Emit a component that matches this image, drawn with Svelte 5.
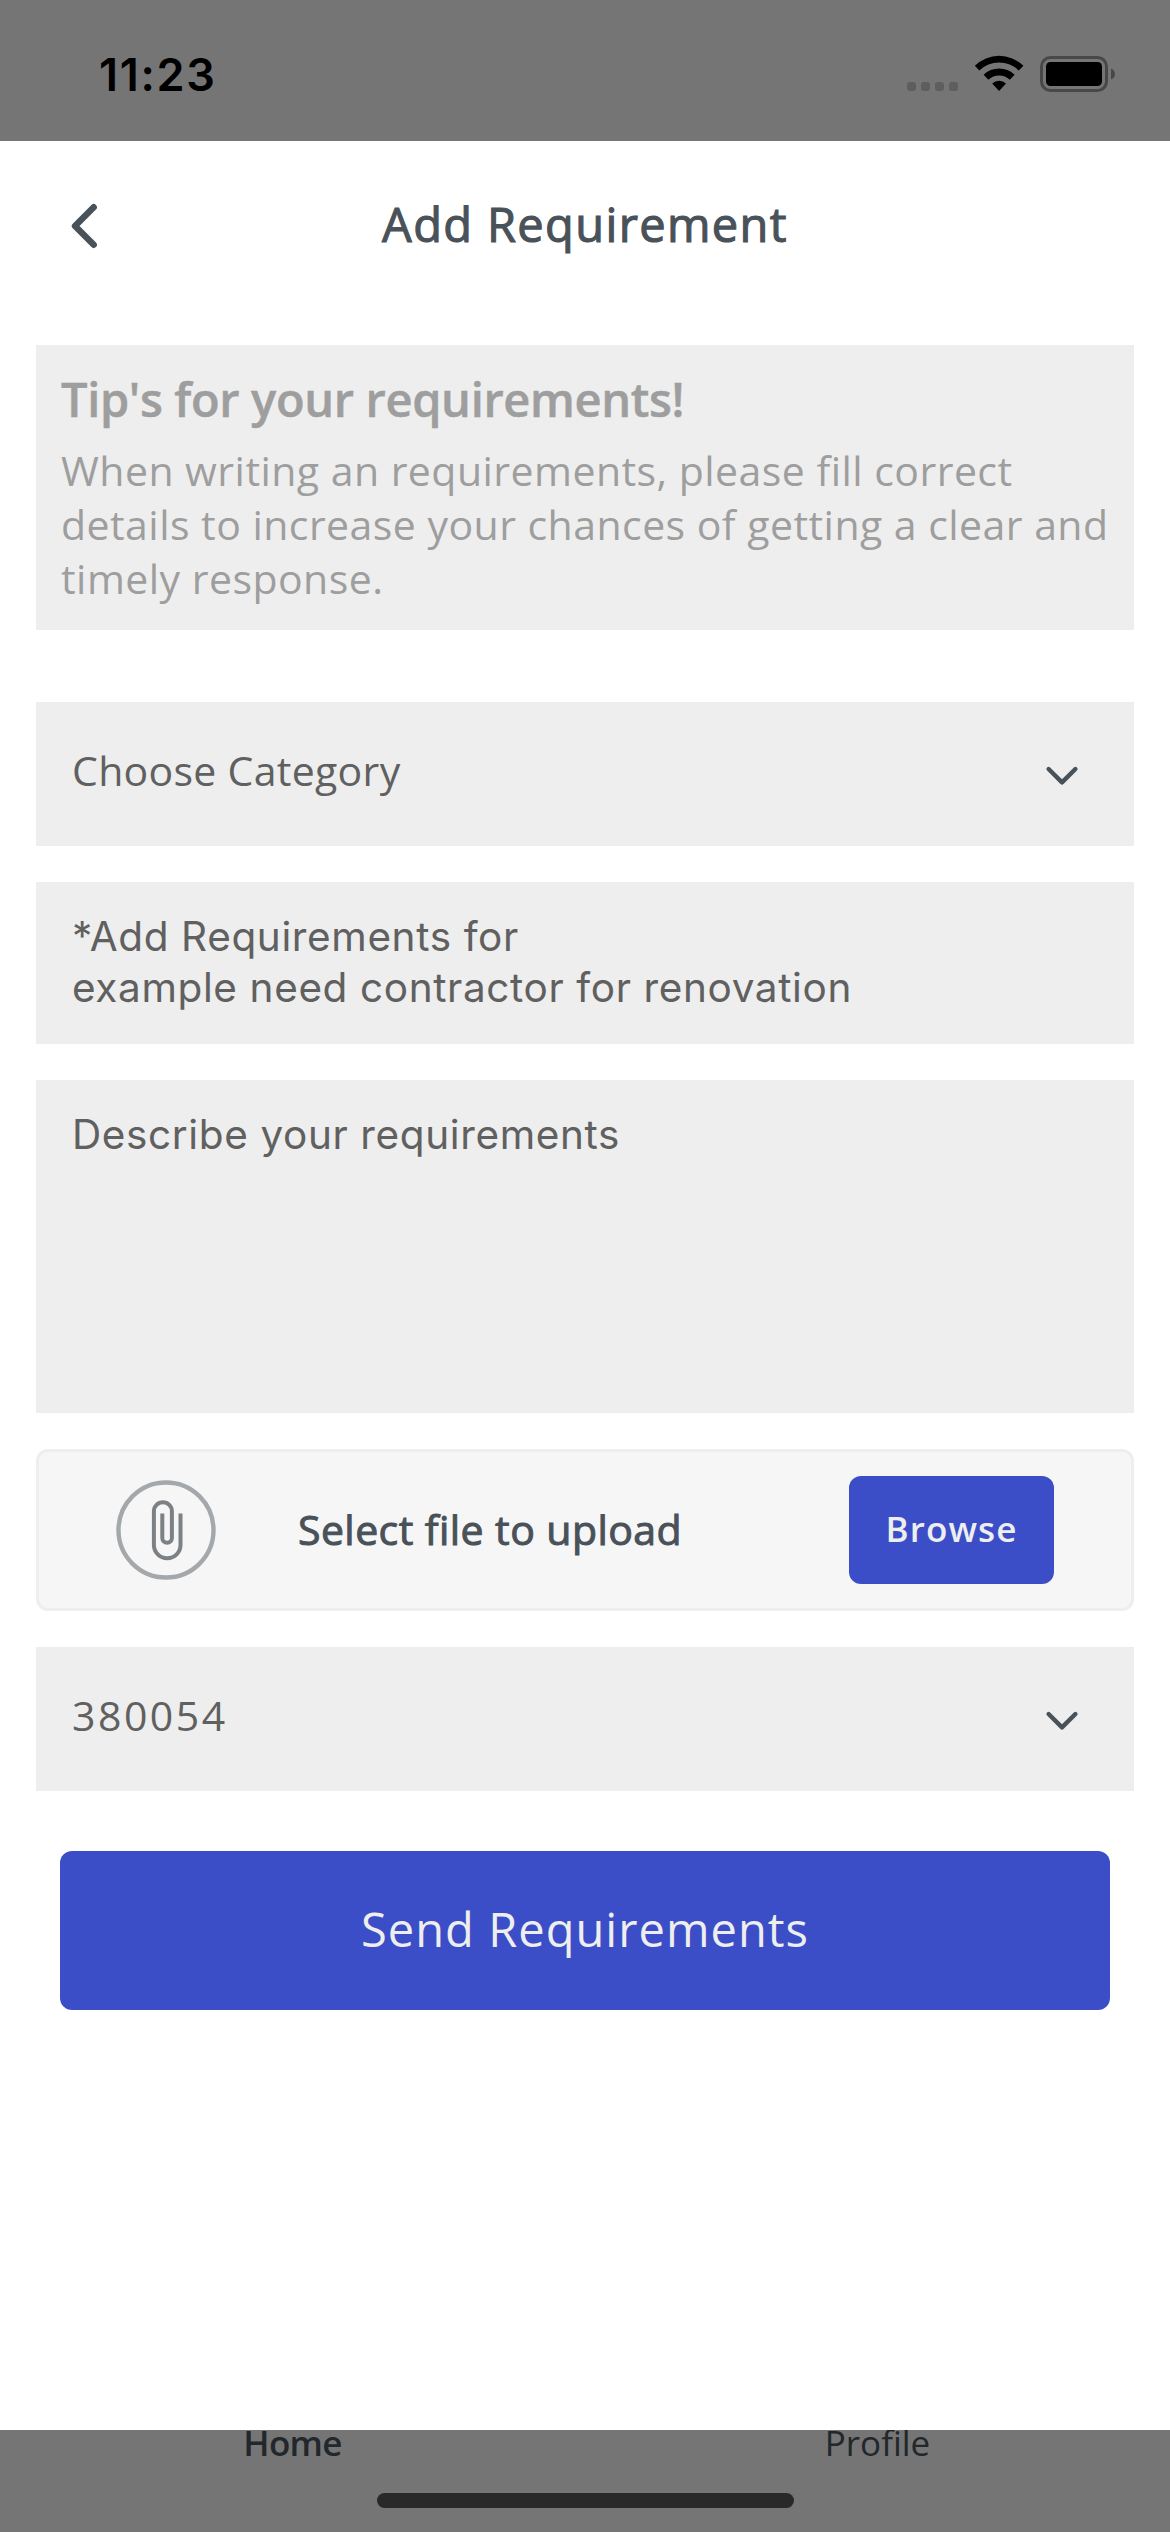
<script>
    let category = 'Choose Category'
    let pincode = '380054'
    let tabs = [ { name: 'Home', active: true }, { name: 'Profile', active: false } ]
</script>

<div class="screen">
    <div class="status">
        <span class="time">11:23</span>
        <svg class="statusIcons" width="210" height="40" viewBox="906 54 210 40">
            <g fill="#5e5e5e">
                <rect x="907" y="82" width="9" height="9" rx="3" />
                <rect x="921" y="82" width="9" height="9" rx="3" />
                <rect x="935" y="82" width="9" height="9" rx="3" />
                <rect x="949" y="82" width="9" height="9" rx="3" />
            </g>
            <path d="M974.8 65.8a34.5 34.5 0 0 1 48.6 0l-4.6 4.8a28 28 0 0 0-39.4 0z" />
            <path d="M983.6 74.8a22 22 0 0 1 31 0l-4.8 5a15.3 15.3 0 0 0-21.4 0z" />
            <path d="M992.2 83.6a9.8 9.8 0 0 1 13.8 0L999.1 91z" />
            <rect x="1041.5" y="57.5" width="65" height="33" rx="9" fill="none" stroke="#484848" stroke-width="3" />
            <rect x="1046" y="62" width="56" height="24" rx="4.5" />
            <path d="M1111 68.5c5.3 2 5.3 9 0 11z" fill="#484848" />
        </svg>
    </div>

    <div class="sheet">
        <header>
            <button class="back" aria-label="Back">
                <svg width="30" height="48" viewBox="0 0 30 48">
                    <path d="M23.7 5.2 5 24l18.7 18.8" fill="none" stroke="#495159" stroke-width="6.4" stroke-linecap="round" stroke-linejoin="round" />
                </svg>
            </button>
            <h1>Add Requirement</h1>
        </header>

        <section class="tips">
            <h2>Tip's for your requirements!</h2>
            <p>When writing an requirements, please fill correct<br />details to increase your chances of getting a clear and<br />timely response.</p>
        </section>

        <div class="form">
            <button class="select">
                <span>{category}</span>
                <svg width="36" height="24" viewBox="0 0 36 24">
                    <path d="M4.6 5 18 18.4 31.4 5" fill="none" stroke="#495159" stroke-width="4.4" stroke-linecap="round" stroke-linejoin="round" />
                </svg>
            </button>

            <div class="field title">*Add Requirements for<br />example need contractor for renovation</div>
            <div class="field describe">Describe your requirements</div>

            <div class="upload">
                <svg width="100" height="100" viewBox="0 0 100 100" fill="none">
                    <circle cx="50" cy="50" r="47.5" stroke="#a4a8ab" stroke-width="4.4" />
                    <path d="M64.5 33.5V45M64.5 33.5V65a13.2 13.2 0 0 1-26.6 0V31.2a9 9 0 0 1 18 0V58a4.8 4.8 0 0 1-9.6 0V33.5" stroke="#7c8186" stroke-width="4" />
                </svg>
                <span class="uploadText">Select file to upload</span>
                <button class="browse">Browse</button>
            </div>

            <button class="select pin">
                <span>{pincode}</span>
                <svg width="36" height="24" viewBox="0 0 36 24">
                    <path d="M4.6 5 18 18.4 31.4 5" fill="none" stroke="#495159" stroke-width="4.4" stroke-linecap="round" stroke-linejoin="round" />
                </svg>
            </button>
        </div>

        <button class="send">Send Requirements</button>
    </div>

    <nav>
        <div class="tabs">
            {#each tabs as tab}
                <span class="tab" class:active={tab.active}>{tab.name}</span>
            {/each}
        </div>
        <div class="homeBar"></div>
    </nav>
</div>

<style>
    :global(body) {
        margin: 0;
    }

    .screen {
        display: flex;
        flex-direction: column;
        width: 1170px;
        height: 2532px;
        background: #757575;
        font-family: "Open Sans", "Liberation Sans", sans-serif;
        overflow: hidden;
    }

    .screen * {
        box-sizing: border-box;
    }

    button {
        font-family: inherit;
        border: none;
        padding: 0;
        margin: 0;
        background: none;
    }

    svg {
        display: block;
        flex: none;
    }

    h1, h2, p {
        margin: 0;
        white-space: nowrap;
    }

    .status {
        display: flex;
        justify-content: space-between;
        align-items: flex-start;
        height: 141px;
        flex: none;
        padding: 54px 54px 0 99px;
    }

    .time {
        font: 600 45px/41px Inter, sans-serif;
        letter-spacing: 1.7px;
        color: #000;
    }

    .sheet {
        display: flex;
        flex-direction: column;
        height: 2289px;
        flex: none;
        background: #fff;
    }

    header {
        display: grid;
        grid-template-columns: 170px 1fr 170px;
        align-items: center;
        height: 165px;
        margin-bottom: 39px;
    }

    .back {
        padding: 5px 0 0 70px;
    }

    h1 {
        padding-top: 1px;
        text-align: center;
        font-size: 47px;
        font-weight: 500;
        line-height: 60px;
        letter-spacing: 1.36px;
        color: #495159;
        -webkit-text-stroke: 1.1px #495159;
    }

    .tips {
        height: 285px;
        margin: 0 36px 72px;
        padding: 24px 25px 0;
        background: #eee;
        color: #9e9e9e;
    }

    h2 {
        font-size: 47px;
        font-weight: 600;
        line-height: 60px;
        letter-spacing: -0.35px;
        -webkit-text-stroke: 0.5px #9e9e9e;
    }

    .tips p {
        margin-top: 14px;
        font-size: 41px;
        line-height: 54px;
        letter-spacing: 0.46px;
    }

    .form {
        display: flex;
        flex-direction: column;
        gap: 36px;
        margin: 0 36px;
    }

    .select {
        display: flex;
        justify-content: space-between;
        align-items: center;
        height: 144px;
        padding: 3px 54px 0 36px;
        background: #eee;
        color: #606060;
        font-size: 41px;
        letter-spacing: 0.3px;
    }

    .select span {
        padding-bottom: 12px;
    }

    .pin {
        letter-spacing: 2.5px;
    }

    .field {
        padding: 29px 36px 0;
        background: #eee;
        color: #606060;
        font: 40.5px/51px Inter, sans-serif;
        letter-spacing: 0.62px;
    }

    .title {
        height: 162px;
    }

    .describe {
        height: 333px;
    }

    .upload {
        display: flex;
        align-items: center;
        height: 162px;
        padding: 0 77px;
        border: 3px solid #eee;
        border-radius: 12px;
        background: #f6f6f6;
    }

    .uploadText {
        margin-left: 82px;
        padding-bottom: 2px;
        font-size: 41px;
        font-weight: 500;
        letter-spacing: 0.43px;
        color: #495159;
        -webkit-text-stroke: 1px #495159;
    }

    .browse {
        width: 205px;
        height: 108px;
        margin-left: auto;
        padding-bottom: 3px;
        border-radius: 12px;
        background: #3b4ec7;
        color: #eee;
        font-size: 35px;
        font-weight: 600;
        letter-spacing: 1.1px;
    }

    .send {
        height: 159px;
        margin: 60px 60px 0;
        padding-bottom: 3px;
        border-radius: 12px;
        background: #3b4ec7;
        color: #eee;
        font-size: 47px;
        letter-spacing: 1.05px;
    }

    nav {
        height: 102px;
        flex: none;
        overflow: hidden;
    }

    /* the sheet cuts off the top of the tab labels */
    .tabs {
        display: grid;
        grid-template-columns: 1fr 1fr;
        margin-top: -11px;
        text-align: center;
    }

    .tab {
        font-size: 35px;
        line-height: 48px;
        color: #22272b;
    }

    .active {
        font-weight: 600;
        letter-spacing: -0.7px;
    }

    .homeBar {
        width: 417px;
        height: 15px;
        margin: 26px auto 0;
        border-radius: 8px;
        background: #292929;
    }
</style>
